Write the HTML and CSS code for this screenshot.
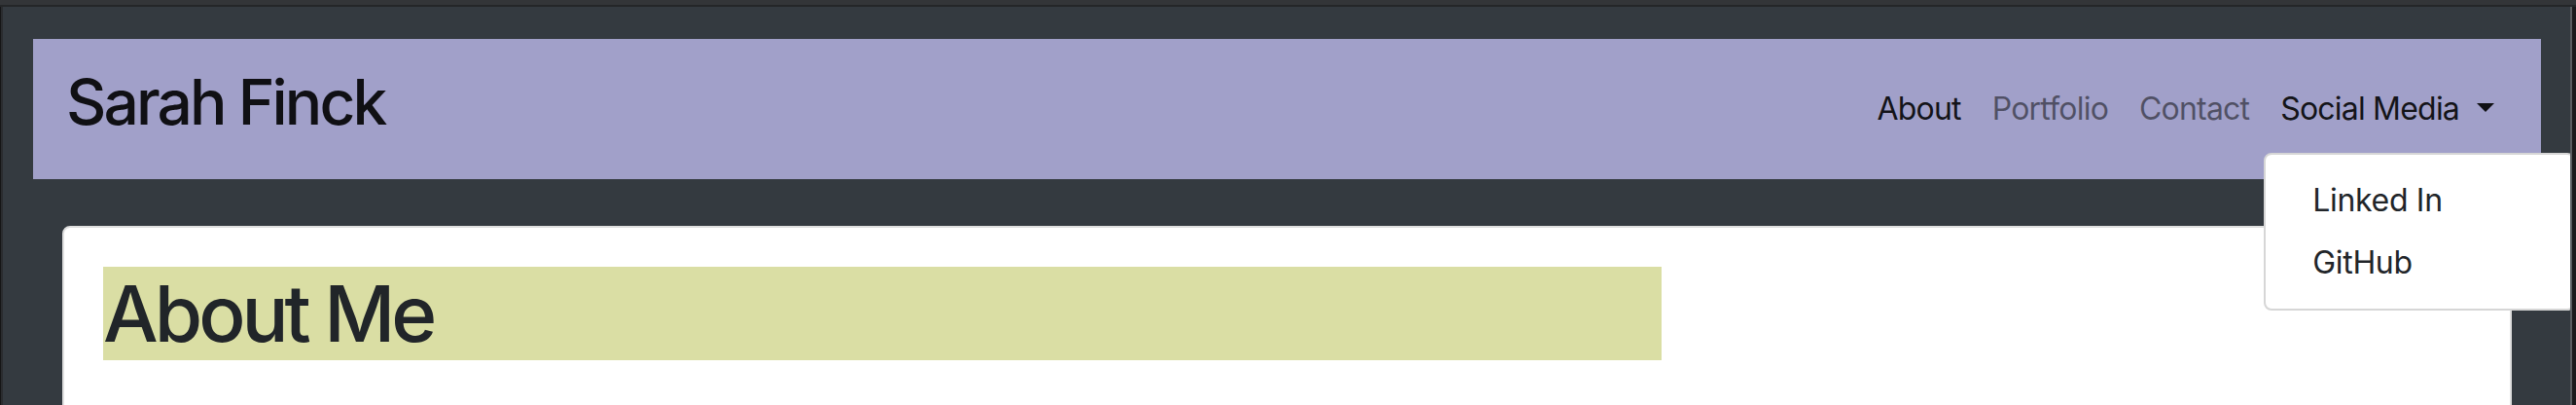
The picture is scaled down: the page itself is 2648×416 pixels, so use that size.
FILE: index.html
```html
<!DOCTYPE html>
<html lang="en">
<head>
<meta charset="utf-8">
<title>Sarah Finck</title>
<link rel="stylesheet" href="styles.css">
</head>
<body>
<div class="screen">
  <div class="chrome-top"></div>
  <div class="frame">
    <div class="edge-left"></div>
    <div class="viewport">
      <nav class="navbar">
        <a class="brand" href="#">Sarah Finck</a>
        <ul class="nav">
          <li class="nav-item"><a class="nav-link active" href="#">About</a></li>
          <li class="nav-item"><a class="nav-link" href="#">Portfolio</a></li>
          <li class="nav-item"><a class="nav-link" href="#">Contact</a></li>
          <li class="nav-item dropdown">
            <a class="nav-link active" href="#">Social Media<span class="caret"></span></a>
            <div class="dropdown-menu">
              <a class="dropdown-item" href="#">Linked In</a>
              <a class="dropdown-item" href="#">GitHub</a>
            </div>
          </li>
        </ul>
      </nav>
      <main class="card">
        <div class="card-body">
          <h1 class="title">About Me</h1>
        </div>
      </main>
    </div>
    <div class="edge-right"></div>
  </div>
</div>
</body>
</html>
```
FILE: styles.css
```css
* { box-sizing: border-box; }
html, body { margin: 0; padding: 0; }
body {
  width: 2648px;
  height: 416px;
  overflow: hidden;
  background: #343a40;
  font-family: Inter, "Noto Sans", "Liberation Sans", sans-serif;
  color: #212529;
}
a { text-decoration: none; }

.screen { display: flex; flex-direction: column; height: 416px; }
.chrome-top {
  height: 7px;
  background: #333538;
  border-bottom: 2px solid #242628;
  flex: none;
}
.frame { display: flex; flex: 1; min-height: 0; }
.edge-left {
  width: 3px;
  flex: none;
  background: #2a2c2f;
  border-left: 1px solid #151516;
}
.edge-right {
  width: 6px;
  flex: none;
  background: #1b1b1d;
  border-left: 2px solid #5a5e62;
}
.viewport {
  flex: 1;
  min-width: 0;
  overflow: hidden;
  background: #343a40;
  padding: 33px 30px 0 31px;
  display: flex;
  flex-direction: column;
  gap: 48px;
}

.navbar {
  height: 144px;
  flex: none;
  background: #a1a0c9;
  padding: 0 32px;
  display: flex;
  align-items: center;
}
.brand {
  font-size: 64px;
  font-weight: 500;
  line-height: 96px;
  letter-spacing: -0.045em;
  color: rgba(0, 0, 0, 0.9);
  padding-bottom: 14px;
  margin-left: 2px;
}
.nav {
  list-style: none;
  margin: 0 0 0 auto;
  padding: 0;
  display: flex;
  align-items: center;
}
.nav-item { position: relative; }
.nav-link {
  display: block;
  font-size: 32px;
  line-height: 48px;
  letter-spacing: -0.025em;
  padding: 16px;
  color: rgba(0, 0, 0, 0.5);
}
.nav-link.active { color: rgba(0, 0, 0, 0.9); }
.caret {
  display: inline-block;
  margin-left: 18px;
  vertical-align: 0.255em;
  border-top: 9.6px solid currentColor;
  border-left: 9.6px solid transparent;
  border-right: 9.6px solid transparent;
}

.dropdown-menu {
  position: absolute;
  top: 85px;
  left: -1px;
  min-width: 320px;
  background: #fff;
  border: 2px solid #d6d6d6;
  border-radius: 8px;
  padding: 15px 0;
  display: flex;
  flex-direction: column;
  z-index: 10;
}
.dropdown-item {
  display: block;
  font-size: 32px;
  line-height: 48px;
  letter-spacing: -0.01em;
  padding: 8px 48px;
  color: #212529;
  white-space: nowrap;
}

.card {
  flex: none;
  height: 300px;
  background: #fff;
  border: 2px solid #dfdfdf;
  border-radius: 8px;
  margin: 0 30px;
}
.card-body { padding: 40px; }
.title {
  margin: 0;
  width: 1602px;
  background: #dadea4;
  font-size: 80px;
  font-weight: 500;
  line-height: 96px;
  letter-spacing: -0.05em;
  color: #212529;
}
```
